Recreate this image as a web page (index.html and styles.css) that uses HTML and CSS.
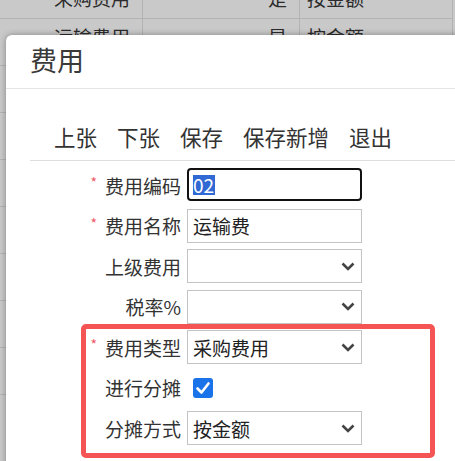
FILE: index.html
```html
<!DOCTYPE html>
<html lang="zh">
<head>
<meta charset="utf-8">
<link rel="stylesheet" href="styles.css">
</head>
<body>
<div class="page">
  <div class="grid">
    <div class="row first"><div class="c1">采购费用</div><div class="c2">是</div><div class="c3">按金额</div></div>
    <div class="row"><div class="c1">运输费用</div><div class="c2">是</div><div class="c3">按金额</div></div>
    <div class="row"><div class="c1"></div><div class="c2"></div><div class="c3"></div></div>
    <div class="row"><div class="c1"></div><div class="c2"></div><div class="c3"></div></div>
    <div class="row"><div class="c1"></div><div class="c2"></div><div class="c3"></div></div>
    <div class="row"><div class="c1"></div><div class="c2"></div><div class="c3"></div></div>
    <div class="row"><div class="c1"></div><div class="c2"></div><div class="c3"></div></div>
    <div class="row"><div class="c1"></div><div class="c2"></div><div class="c3"></div></div>
    <div class="row"><div class="c1"></div><div class="c2"></div><div class="c3"></div></div>
  </div>

  <div class="dialog">
    <div class="dlg-head">费用</div>
    <div class="toolbar">
      <span class="tb">上张</span><span class="tb">下张</span><span class="tb">保存</span><span class="tb">保存新增</span><span class="tb">退出</span>
    </div>
    <div class="form">
      <div class="lbl"><span class="req">*</span>费用编码</div>
      <div class="field input focused"><span class="sel">02</span></div>

      <div class="lbl"><span class="req">*</span>费用名称</div>
      <div class="field input">运输费</div>

      <div class="lbl">上级费用</div>
      <div class="field select"><span class="val"></span><svg class="chev" width="14" height="9" viewBox="0 0 14 9"><polyline points="1.5,1.5 7,7 12.5,1.5" fill="none" stroke="#444" stroke-width="2.6"/></svg></div>

      <div class="lbl">税率%</div>
      <div class="field select"><span class="val"></span><svg class="chev" width="14" height="9" viewBox="0 0 14 9"><polyline points="1.5,1.5 7,7 12.5,1.5" fill="none" stroke="#444" stroke-width="2.6"/></svg></div>

      <div class="lbl"><span class="req">*</span>费用类型</div>
      <div class="field select"><span class="val">采购费用</span><svg class="chev" width="14" height="9" viewBox="0 0 14 9"><polyline points="1.5,1.5 7,7 12.5,1.5" fill="none" stroke="#444" stroke-width="2.6"/></svg></div>

      <div class="lbl">进行分摊</div>
      <div class="field check-wrap"><span class="check"><svg width="20" height="20" viewBox="0 0 20 20"><polyline points="4.5,10.5 8.5,14.5 15.5,5.5" fill="none" stroke="#fff" stroke-width="2.6" stroke-linecap="round" stroke-linejoin="round"/></svg></span></div>

      <div class="lbl">分摊方式</div>
      <div class="field select"><span class="val">按金额</span><svg class="chev" width="14" height="9" viewBox="0 0 14 9"><polyline points="1.5,1.5 7,7 12.5,1.5" fill="none" stroke="#444" stroke-width="2.6"/></svg></div>
    </div>
    <div class="mark"></div>
  </div>
</div>
</body>
</html>
```
FILE: styles.css
```css
* { box-sizing: border-box; }
html, body { margin: 0; padding: 0; }
body {
  width: 455px;
  height: 461px;
  overflow: hidden;
  background: #c9c9c9;
  font-family: "Noto Sans CJK SC", "Noto Sans", sans-serif;
  color: #333;
}
.page {
  position: relative;
  width: 455px;
  height: 461px;
  overflow: hidden;
}
.grid {
  margin-top: -19px;
  width: 453px;
}
.row {
  display: grid;
  grid-template-columns: 143px 157px 1fr;
  height: 38px;
  border-bottom: 1px solid #b3b3b3;
  font-size: 19px;
  color: #2b2b2b;
  line-height: 38px;
}
.row.first { height: 38px; line-height: 34px; }
.row + .row { height: 47px; line-height: 36px; }
.row > div { border-right: 1px solid #b3b3b3; padding: 0 12px; white-space: nowrap; overflow: hidden; }
.c1 { text-align: right; }
.c2 { text-align: right; }
.c3 { text-align: left; border-right: none; padding-left: 7px !important; }

.dialog {
  position: absolute;
  left: 6px;
  top: 35px;
  width: 470px;
  height: 460px;
  background: #fff;
  border-radius: 6px 0 0 0;
  box-shadow: 0 0 6px rgba(0,0,0,0.35);
}
.dlg-head {
  height: 54px;
  padding-left: 24px;
  font-size: 27px;
  line-height: 50px;
  color: #3a3a3a;
  border-bottom: 1px solid #e4e4e4;
}
.toolbar {
  margin-left: 24px;
  height: 72px;
  padding: 36px 0 0 24px;
  border-bottom: 1px solid #dedede;
  display: flex;
  gap: 20px;
  font-size: 21.5px;
  line-height: 24px;
  color: #333;
  white-space: nowrap;
}
.form {
  padding-top: 7px;
  display: grid;
  grid-template-columns: 175px 175px;
  column-gap: 6px;
  row-gap: 6.5px;
}
.lbl {
  height: 34px;
  display: flex;
  align-items: center;
  justify-content: flex-end;
  font-size: 19px;
  color: #333;
  white-space: nowrap;
}
.req {
  color: #ef5a6a;
  font-size: 14px;
  margin-right: 8px;
  position: relative;
  top: -3px;
}
.field {
  height: 34px;
  display: flex;
  align-items: center;
  font-size: 19px;
  color: #222;
}
.input {
  border: 1px solid #c4c4c4;
  padding-left: 5px;
}
.input.focused {
  border: 2px solid #111;
  border-radius: 4px;
  padding-left: 4px;
  height: 33px;
}
.sel {
  background: #3169d4;
  color: #fff;
  line-height: 20px;
  padding: 0 1px 0 0;
}
.select {
  border: 1px solid #c4c4c4;
  padding-left: 5px;
  padding-right: 6px;
  justify-content: space-between;
}
.chev { display: block; flex: none; }
.check-wrap { padding-left: 6px; }
.check {
  width: 20px;
  height: 20px;
  border-radius: 3px;
  background: #1a73e8;
  display: block;
}
.check svg { display: block; }
.mark {
  position: absolute;
  left: 75px;
  top: 289px;
  width: 354px;
  height: 134px;
  border: 5px solid #f55454;
  border-radius: 5px;
}
```
